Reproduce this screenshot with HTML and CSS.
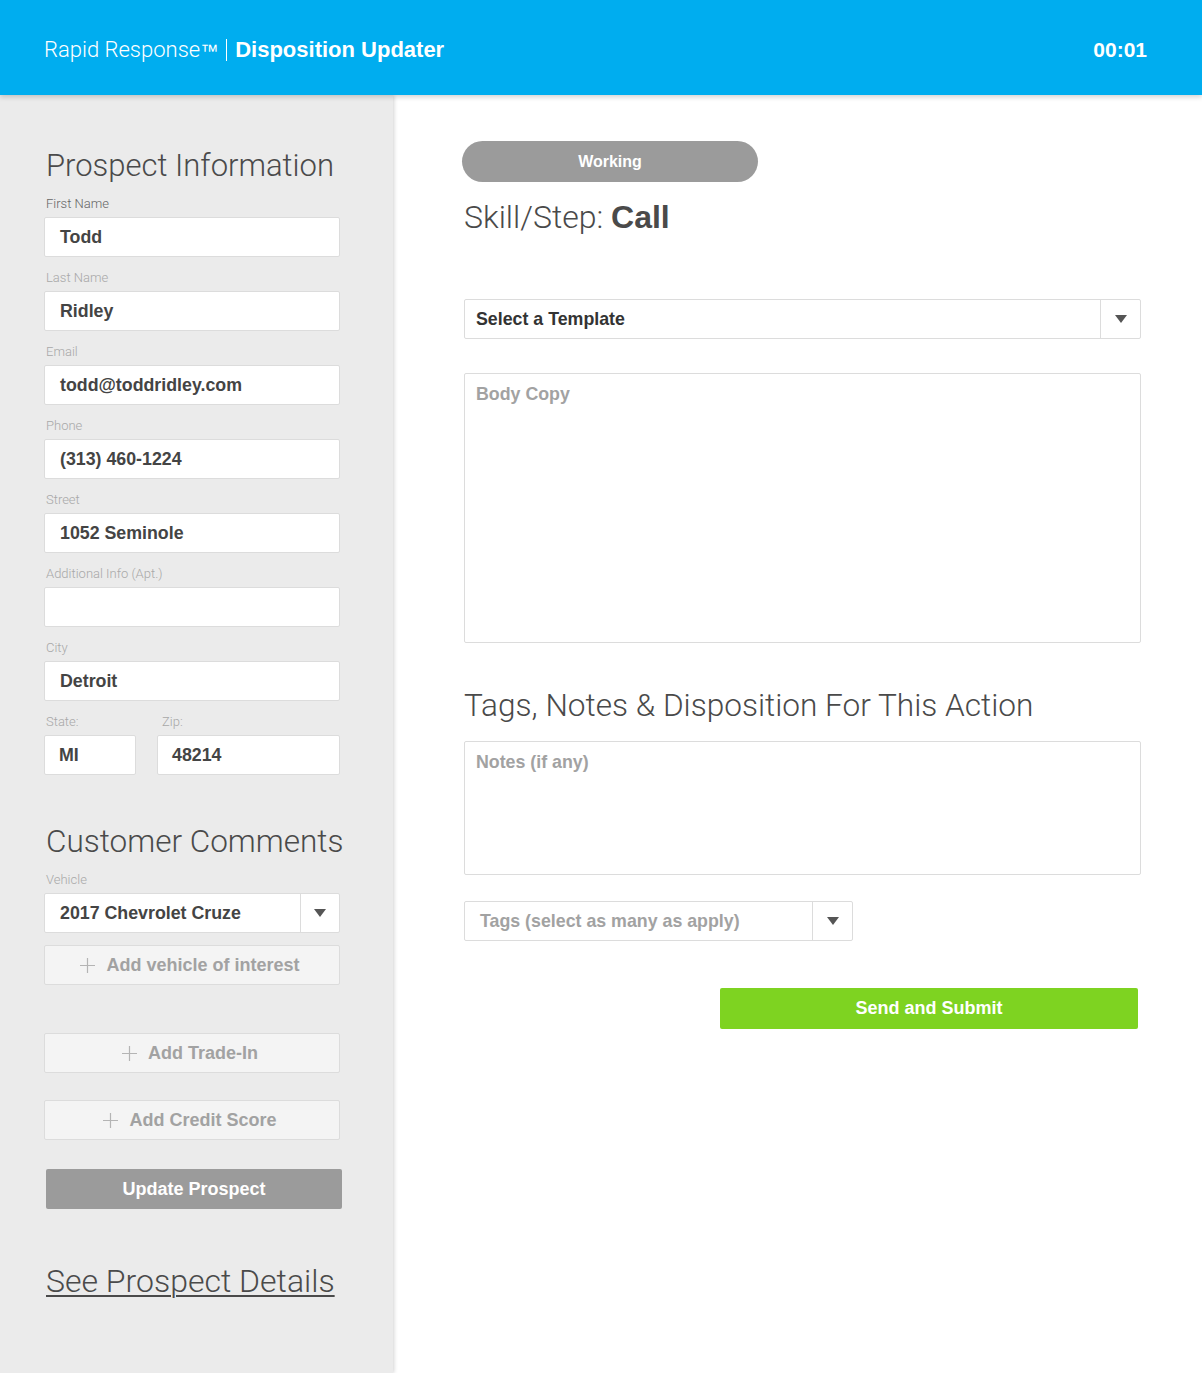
FILE: index.html
```html
<!DOCTYPE html>
<html>
<head>
<meta charset="utf-8">
<title>Disposition Updater</title>
<link rel="stylesheet" href="styles.css">
</head>
<body>
<header class="topbar">
  <div class="brand"><span class="brand-light">Rapid Response<span class="tm">™</span></span><span class="brand-sep"></span><span class="brand-bold">Disposition Updater</span></div>
  <div class="timer">00:01</div>
</header>
<div class="main">
  <aside class="sidebar">
    <h2 class="side-title">Prospect Information</h2>
    <div class="field"><div class="label label-active">First Name</div><div class="input">Todd</div></div>
    <div class="field"><div class="label">Last Name</div><div class="input">Ridley</div></div>
    <div class="field"><div class="label">Email</div><div class="input">todd@toddridley.com</div></div>
    <div class="field"><div class="label">Phone</div><div class="input">(313) 460-1224</div></div>
    <div class="field"><div class="label">Street</div><div class="input">1052 Seminole</div></div>
    <div class="field"><div class="label">Additional Info (Apt.)</div><div class="input"></div></div>
    <div class="field"><div class="label">City</div><div class="input">Detroit</div></div>
    <div class="field-row">
      <div class="field state"><div class="label">State:</div><div class="input">MI</div></div>
      <div class="field zip"><div class="label">Zip:</div><div class="input">48214</div></div>
    </div>
    <h2 class="side-title comments-title">Customer Comments</h2>
    <div class="label">Vehicle</div>
    <div class="select side-select"><span class="select-text">2017 Chevrolet Cruze</span><span class="select-arrow"><svg width="12" height="8" viewBox="0 0 12 8"><path d="M0 0H12L6 8Z" fill="#555"/></svg></span></div>
    <div class="add-btn add-vehicle"><svg class="plus" width="15" height="15" viewBox="0 0 15 15"><path d="M7.5 0V15M0 7.5H15" stroke="#b4b4b4" stroke-width="1.2"/></svg><span>Add vehicle of interest</span></div>
    <div class="add-btn add-trade"><svg class="plus" width="15" height="15" viewBox="0 0 15 15"><path d="M7.5 0V15M0 7.5H15" stroke="#b4b4b4" stroke-width="1.2"/></svg><span>Add Trade-In</span></div>
    <div class="add-btn add-credit"><svg class="plus" width="15" height="15" viewBox="0 0 15 15"><path d="M7.5 0V15M0 7.5H15" stroke="#b4b4b4" stroke-width="1.2"/></svg><span>Add Credit Score</span></div>
    <div class="update-btn">Update Prospect</div>
    <a class="details-link" href="#">See Prospect Details</a>
  </aside>
  <section class="content">
    <div class="status-pill">Working</div>
    <h1 class="skill">Skill/Step: <b>Call</b></h1>
    <div class="select template-select"><span class="select-text">Select a Template</span><span class="select-arrow"><svg width="12" height="8" viewBox="0 0 12 8"><path d="M0 0H12L6 8Z" fill="#555"/></svg></span></div>
    <div class="textarea body-copy"><span class="placeholder">Body Copy</span></div>
    <h2 class="section-title">Tags, Notes &amp; Disposition For This Action</h2>
    <div class="textarea notes"><span class="placeholder">Notes (if any)</span></div>
    <div class="select tags-select"><span class="select-text muted">Tags (select as many as apply)</span><span class="select-arrow"><svg width="12" height="8" viewBox="0 0 12 8"><path d="M0 0H12L6 8Z" fill="#555"/></svg></span></div>
    <div class="submit-row"><div class="submit-btn">Send and Submit</div></div>
  </section>
</div>
</body>
</html>
```

FILE: styles.css
```css
* { box-sizing: border-box; }
html, body { margin: 0; padding: 0; }
body {
  font-family: "Liberation Sans", Arial, sans-serif;
  color: #444;
  background: #fff;
  min-height: 100vh;
  display: flex;
  flex-direction: column;
}
.topbar {
  height: 95px;
  flex: 0 0 95px;
  background: #00adef;
  color: #fff;
  display: flex;
  align-items: center;
  justify-content: space-between;
  padding: 4px 55px 0 44px;
  position: relative;
  z-index: 2;
  box-shadow: 0 2px 5px rgba(0,0,0,0.18);
}
.brand { display: flex; align-items: center; font-size: 22px; }
.brand-light { font-family: Roboto, "Liberation Sans", sans-serif; font-weight: 300; }
.tm { font-family: "Liberation Sans", Arial, sans-serif; font-weight: 400; font-size: 18px; }
.brand-sep { display: inline-block; width: 1px; height: 22px; background: #fff; margin: 0 8px 0 8px; }
.brand-bold { font-weight: 700; font-size: 22px; }
.timer { font-size: 21px; font-weight: 700; }

.main { flex: 1; display: flex; }
.sidebar {
  width: 393px;
  flex: 0 0 393px;
  background: #ebebeb;
  padding: 52px 53px 40px 44px;
  box-shadow: 1px 0 4px rgba(0,0,0,0.18);
  position: relative;
  z-index: 1;
}
.side-title {
  font-family: Roboto, "Liberation Sans", sans-serif;
  font-weight: 300;
  font-size: 31px;
  line-height: 38px;
  color: #4a4a4a;
  margin: 0 0 11px 2px;
  white-space: nowrap;
}
.comments-title { font-size: 31.5px; margin-top: 48px; margin-bottom: 11px; }
.label {
  font-family: Roboto, "Liberation Sans", sans-serif;
  font-weight: 300;
  font-size: 13px;
  line-height: 16px;
  color: #a8a8a8;
  margin: 0 0 5px 2px;
}
.label-active { color: #666; }
.field { margin-bottom: 13px; }
.input {
  height: 40px;
  background: #fff;
  border: 1px solid #dcdcdc;
  border-radius: 2px;
  font-size: 17.8px;
  font-weight: 700;
  color: #444;
  line-height: 38px;
  padding-left: 15px;
}
.field-row { display: flex; gap: 21px; }
.field-row .field { margin-bottom: 0; }
.state { width: 92px; }
.zip { width: 183px; }
.zip .label { margin-left: 5px; }
.zip .input { padding-left: 14px; }
.state .input { padding-left: 14px; }

.select {
  height: 40px;
  background: #fff;
  border: 1px solid #dcdcdc;
  border-radius: 2px;
  display: flex;
  align-items: stretch;
}
.select-text {
  flex: 1;
  font-size: 17.8px;
  font-weight: 700;
  line-height: 38px;
  padding-left: 15px;
  color: #444;
  white-space: nowrap;
}
.select-arrow {
  width: 40px;
  flex: 0 0 40px;
  border-left: 1px solid #dcdcdc;
  display: flex;
  align-items: center;
  justify-content: center;
}
.side-select .select-arrow { width: 39px; flex-basis: 39px; }

.add-btn {
  height: 40px;
  background: #f4f4f4;
  border: 1px solid #dcdcdc;
  border-radius: 2px;
  display: flex;
  align-items: center;
  justify-content: center;
  gap: 11px;
  padding-right: 4px;
  font-size: 18px;
  font-weight: 700;
  color: #a2a2a2;
}
.add-vehicle { margin-top: 12px; }
.add-trade { margin-top: 48px; }
.add-credit { margin-top: 27px; }
.update-btn {
  margin: 29px 0 0 2px;
  width: 296px;
  height: 40px;
  background: #9b9b9b;
  border-radius: 2px;
  color: #fff;
  font-size: 18px;
  font-weight: 700;
  display: flex;
  align-items: center;
  justify-content: center;
}
.details-link {
  display: inline-block;
  margin: 53px 0 0 2px;
  font-family: Roboto, "Liberation Sans", sans-serif;
  font-weight: 300;
  font-size: 32px;
  line-height: 38px;
  color: #4a4a4a;
  text-decoration: underline;
  text-decoration-thickness: 2px;
  text-underline-offset: 3px;
}

.content {
  flex: 1;
  padding: 46px 61px 40px 71px;
  display: flex;
  flex-direction: column;
}
.status-pill {
  width: 296px;
  height: 41px;
  margin-left: -2px;
  border-radius: 21px;
  background: #9b9b9b;
  color: #fff;
  font-size: 16px;
  font-weight: 700;
  display: flex;
  align-items: center;
  justify-content: center;
}
.skill {
  margin: 16px 0 0 0;
  font-family: Roboto, "Liberation Sans", sans-serif;
  font-weight: 300;
  font-size: 32px;
  line-height: 38px;
  color: #4a4a4a;
}
.skill b { font-family: "Liberation Sans", Arial, sans-serif; font-weight: 700; }
.template-select { margin-top: 63px; }
.template-select .select-text { padding-left: 11px; color: #333; }
.textarea {
  background: #fff;
  border: 1px solid #dcdcdc;
  border-radius: 2px;
  padding: 9px 11px;
}
.placeholder {
  font-size: 17.8px;
  font-weight: 700;
  color: #a2a2a2;
  line-height: 22px;
}
.body-copy { margin-top: 34px; height: 270px; }
.section-title {
  margin: 44px 0 0 0;
  font-family: Roboto, "Liberation Sans", sans-serif;
  font-weight: 300;
  font-size: 31.6px;
  line-height: 38px;
  color: #4a4a4a;
}
.notes { margin-top: 16px; height: 134px; }
.tags-select { margin-top: 26px; width: 389px; }
.tags-select .muted { color: #a2a2a2; padding-left: 15px; }
.submit-row { display: flex; margin-top: 47px; padding-left: 256px; }
.submit-btn {
  width: 418px;
  height: 41px;
  background: #7ed321;
  border-radius: 2px;
  color: #fff;
  font-size: 18px;
  font-weight: 700;
  display: flex;
  align-items: center;
  justify-content: center;
}
```
